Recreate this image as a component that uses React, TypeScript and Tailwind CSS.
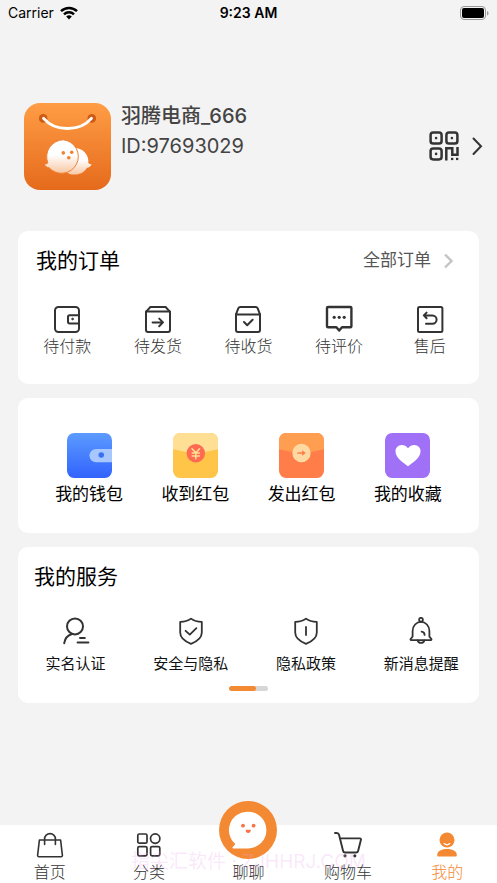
import type { ReactNode } from "react";

type Item = { label: string; icon: ReactNode };

function Line({ children, size = 28, width = 2 }: { children: ReactNode; size?: number; width?: number }) {
  return (
    <svg
      width={size}
      height={size}
      viewBox="0 0 28 28"
      fill="none"
      stroke="currentColor"
      strokeWidth={width}
      strokeLinecap="round"
      strokeLinejoin="round"
      aria-hidden="true"
    >
      {children}
    </svg>
  );
}

const orders: Item[] = [
  {
    label: "待付款",
    icon: (
      <Line>
        <rect x="2" y="2" width="24" height="25" rx="3.5" />
        <path d="M26 10.2H16.6a1.6 1.6 0 0 0-1.6 1.6v5a1.6 1.6 0 0 0 1.6 1.6H26" />
        <circle cx="19.5" cy="14" r="0.8" fill="currentColor" strokeWidth="1" />
      </Line>
    ),
  },
  {
    label: "待发货",
    icon: (
      <Line>
        <path d="M2.2 6.6 6.4 2h15.2l4.2 4.6" />
        <path d="M2 6.6h24V25a2 2 0 0 1-2 2H4a2 2 0 0 1-2-2z" />
        <path d="M8.6 17.4h10M15.2 13.6l3.8 3.8-3.8 3.8" />
      </Line>
    ),
  },
  {
    label: "待收货",
    icon: (
      <Line>
        <path d="M2 9.4 4.4 3.2A2 2 0 0 1 6.2 2h15.6a2 2 0 0 1 1.8 1.2L26 9.4V25a2 2 0 0 1-2 2H4a2 2 0 0 1-2-2z" />
        <path d="M2 9.4h24M10 17l3.2 3.2 5.4-5.4" />
      </Line>
    ),
  },
  {
    label: "待评价",
    icon: (
      <Line width={2.4}>
        <path d="M3 2h22.4a1 1 0 0 1 1 1v18.2a1 1 0 0 1-1 1H17l-2.8 3.4-2.8-3.4H3a1 1 0 0 1-1-1V3a1 1 0 0 1 1-1z" />
        <g fill="currentColor" stroke="none">
          <circle cx="9.2" cy="12.3" r="1.6" />
          <circle cx="14.2" cy="12.3" r="1.6" />
          <circle cx="19.2" cy="12.3" r="1.6" />
        </g>
      </Line>
    ),
  },
  {
    label: "售后",
    icon: (
      <Line>
        <rect x="2" y="2" width="24.4" height="25" rx="1.5" />
        <path d="M10 18.8h6.4a4.2 4.2 0 0 0 0-8.4H8.4M10.6 7.6l-2.8 2.8 2.8 2.8" />
      </Line>
    ),
  },
];

const wallets: Item[] = [
  {
    label: "我的钱包",
    icon: (
      <svg width="45" height="45" viewBox="0 0 44 44" aria-hidden="true">
        <defs>
          <linearGradient id="wallet" x1="0" y1="0" x2="0" y2="1">
            <stop offset="0" stopColor="#5c9bff" />
            <stop offset="1" stopColor="#3263fd" />
          </linearGradient>
        </defs>
        <rect width="44" height="44" rx="7" fill="url(#wallet)" />
        <path d="M44 15.6H28.4a6.5 6.5 0 0 0 0 13H44z" fill="#a9c7ff" />
        <circle cx="33.5" cy="21.6" r="2.7" fill="#3770f5" />
      </svg>
    ),
  },
  {
    label: "收到红包",
    icon: (
      <svg width="45" height="45" viewBox="0 0 44 44" aria-hidden="true">
        <rect width="44" height="44" rx="7" fill="#ffc549" />
        <path d="M0 15.8V7a7 7 0 0 1 7-7h30a7 7 0 0 1 7 7v8.8Q22 22 0 15.8z" fill="#ffdf94" />
        <circle cx="22.3" cy="19.8" r="9" fill="#ff6a53" />
        <path
          d="m18.6 15.4 3.7 4 3.7-4M22.3 19.4v5.8M18.8 19.6h7M18.8 22.4h7"
          fill="none"
          stroke="#ffdf94"
          strokeWidth="1.5"
          strokeLinecap="round"
        />
      </svg>
    ),
  },
  {
    label: "发出红包",
    icon: (
      <svg width="45" height="45" viewBox="0 0 44 44" aria-hidden="true">
        <rect width="44" height="44" rx="7" fill="#ff7d49" />
        <path d="M0 15.8V7a7 7 0 0 1 7-7h30a7 7 0 0 1 7 7v8.8Q22 22 0 15.8z" fill="#ff9d50" />
        <circle cx="22" cy="19.6" r="9" fill="#ffd9a2" />
        <path d="M18 19.6h5.500" stroke="#ff7d49" strokeWidth="1.500" />
        <path d="m22.600 16.900 3.600 2.700-3.600 2.700z" fill="#ff7d49" />
      </svg>
    ),
  },
  {
    label: "我的收藏",
    icon: (
      <svg width="45" height="45" viewBox="0 0 44 44" aria-hidden="true">
        <rect width="44" height="44" rx="7" fill="#a070f6" />
        <path
          d="M22.5 32.5C19.5 30 10.2 24.6 10.2 17.8a6 6 0 0 1 6-6c2.8 0 4.8 1.2 6.3 3.2 1.5-2 3.5-3.2 6.3-3.2a6 6 0 0 1 6 6c0 6.800-9.300 12.200-12.300 14.700z"
          fill="#fff"
        />
      </svg>
    ),
  },
];

const shield = "M14 1.600c3.200 2.400 6.800 3.200 10.800 3.300v10.600c0 5.200-4.600 8.900-10.800 11.300C7.800 24.400 3.200 20.700 3.200 15.500V4.900C7.200 4.800 10.800 4 14 1.600z";

const services: Item[] = [
  {
    label: "实名认证",
    icon: (
      <Line>
        <circle cx="13" cy="9.400" r="8" />
        <path d="M10 17C5.500 18.400 2.800 22 2.200 26.200M18 20.900h4.800M15.600 25.400h10.800" />
      </Line>
    ),
  },
  {
    label: "安全与隐私",
    icon: (
      <Line width={1.8}>
        <path d={shield} />
        <path d="m8.600 13.800 4.200 3.800 6.600-6.400" />
      </Line>
    ),
  },
  {
    label: "隐私政策",
    icon: (
      <Line width={1.8}>
        <path d={shield} />
        <path d="M14 10v8" />
      </Line>
    ),
  },
  {
    label: "新消息提醒",
    icon: (
      <Line width={1.8}>
        <circle cx="14" cy="2.700" r="1.900" />
        <path d="M5.600 14a8.400 9.200 0 0 1 16.800 0v5.600l2 2.400a.7.7 0 0 1-.5 1.100H4.100a.7.7 0 0 1-.5-1.100l2-2.400z" />
        <path d="M10.600 23.300a3.500 3.500 0 0 0 6.800 0M14.600 14.600a3.400 3.400 0 0 1 3 3.300" />
      </Line>
    ),
  },
];

const tabs: (Item & { active?: boolean })[] = [
  {
    label: "首页",
    icon: (
      <Line width={1.600}>
        <path d="M3.400 9h21.200l1.800 15.400a1.200 1.200 0 0 1-1.200 1.300H2.800a1.200 1.200 0 0 1-1.200-1.300z" />
        <path d="M8.600 13.400V8a5.400 5.400 0 0 1 10.800 0v5.400" />
      </Line>
    ),
  },
  {
    label: "分类",
    icon: (
      <Line width={1.700}>
        <rect x="2.800" y="3" width="9.200" height="9.200" rx="1.500" />
        <circle cx="20.200" cy="7.600" r="4.700" />
        <rect x="2.800" y="15.600" width="9.200" height="9.200" rx="1.500" />
        <rect x="15.600" y="15.600" width="9.200" height="9.200" rx="1.500" />
      </Line>
    ),
  },
  {
    label: "聊聊",
    icon: (
      <svg className="-mt-6" width="58" height="58" viewBox="0 0 58 58" aria-hidden="true">
        <circle cx="29" cy="29" r="29" fill="#f48934" />
        <path d="M29 10.700a18.400 18.400 0 0 1 0 36.800H14.400c-1 0-1.300-1-.6-1.600l2.600-2.800A18.400 18.400 0 0 1 29 10.700z" fill="#fff" />
        <g fill="#f8734a">
          <circle cx="24" cy="24.700" r="1.900" />
          <circle cx="34.600" cy="24.700" r="1.900" />
          <path d="M26.700 28.800h5a2.500 3.200 0 0 1-5 0z" />
        </g>
      </svg>
    ),
  },
  {
    label: "购物车",
    icon: (
      <Line width={1.900}>
        <path d="M1 2h1.600a2.600 2.600 0 0 1 2.500 2l4 16a2 2 0 0 0 1.900 1.500h11.200a2 2 0 0 0 1.900-1.500L27 8.600a1 1 0 0 0-1-1.200H6" />
        <g fill="currentColor" stroke="none">
          <circle cx="11" cy="24.800" r="1.600" />
          <circle cx="20.800" cy="24.800" r="1.600" />
        </g>
      </Line>
    ),
  },
  {
    label: "我的",
    active: true,
    icon: (
      <svg width="28" height="28" viewBox="0 0 28 28" fill="currentColor" aria-hidden="true">
        <circle cx="14" cy="9" r="7.500" />
        <path d="M4.200 24c0-3.600 3.600-6 9.800-6s9.800 2.400 9.800 6c0 1-.5 1.500-1.500 1.500H5.700c-1 0-1.500-.5-1.500-1.500z" />
        <path d="M11.200 12.600q2.800 2.400 5.600 0" fill="none" stroke="#fff" strokeWidth="1.300" strokeLinecap="round" />
      </svg>
    ),
  },
];

function Avatar() {
  return (
    <svg width="87" height="87" viewBox="0 0 87 87" role="img" aria-label="羽腾电商">
      <defs>
        <linearGradient id="bag" x1="0" y1="0" x2="0" y2="1">
          <stop offset="0" stopColor="#ff9d45" />
          <stop offset="1" stopColor="#e56a1c" />
        </linearGradient>
        <linearGradient id="ghost" x1="0" y1="0" x2="0" y2="1">
          <stop offset="0" stopColor="#fff" />
          <stop offset="0.450" stopColor="#fff" />
          <stop offset="1" stopColor="#f8c7a2" />
        </linearGradient>
      </defs>
      <rect width="87" height="87" rx="16" fill="url(#bag)" />
      <circle cx="19.200" cy="15.400" r="4.300" fill="#cf5a14" />
      <circle cx="67.800" cy="15.400" r="4.300" fill="#cf5a14" />
      <path d="M19.600 15.400C31 29 56 29 67.400 15.400" fill="none" stroke="#fff" strokeWidth="3" strokeLinecap="round" />
      <path d="M50 45a13.500 13.500 0 0 1 14.300 15c1 1 2 1.300 3.300 1.200-.8 2.200-2.500 3.400-4.800 3.700C58 73 47 73 42 69z" fill="url(#ghost)" />
      <path
        d="M39.300 36.800a16.800 16.800 0 1 1-14.200 28c-2.400-.3-4-1.500-4.700-3.700 1.300.1 2.400-.2 3.400-1.200A17 17 0 0 1 39.300 36.800z"
        fill="url(#ghost)"
        stroke="#ee8237"
        strokeWidth="1"
      />
      <g fill="#f08034">
        <circle cx="39.300" cy="49.900" r="1.800" />
        <circle cx="47.700" cy="49.300" r="1.800" />
        <circle cx="44.800" cy="54.800" r="1.800" />
      </g>
    </svg>
  );
}

function QrIcon() {
  return (
    <svg width="30" height="30" viewBox="0 0 30 30" fill="none" stroke="currentColor" strokeWidth="2.500" aria-hidden="true">
      <rect x="1.600" y="1.600" width="11" height="11" rx="2.600" />
      <rect x="17.400" y="1.600" width="11" height="11" rx="2.600" />
      <rect x="1.600" y="17.400" width="11" height="11" rx="2.600" />
      <path d="M17.300 29.400V17.200h6v6.600h5.200V16" />
      <g fill="currentColor" stroke="none">
        <circle cx="7.100" cy="7.100" r="1.300" />
        <circle cx="22.900" cy="7.100" r="1.300" />
        <circle cx="7.100" cy="22.900" r="1.300" />
        <rect x="22" y="26.800" width="2.300" height="2.300" />
        <rect x="27" y="26.800" width="2.300" height="2.300" />
      </g>
    </svg>
  );
}

function StatusBar() {
  return (
    <header className="grid h-[26px] grid-cols-3 items-center px-2 text-sm text-black">
      <div className="flex items-center gap-1.5">
        <span>Carrier</span>
        <svg width="18" height="14" viewBox="0 0 18 14" fill="none" stroke="currentColor" strokeWidth="2.500" aria-hidden="true">
          <path d="M1 5.200a11.400 11.400 0 0 1 16 0M4 8.300a7.200 7.200 0 0 1 10 0" />
          <path d="M9 13.400 6.200 10.600a4 4 0 0 1 5.600 0z" fill="currentColor" stroke="none" />
        </svg>
      </div>
      <time className="text-center font-semibold">9:23 AM</time>
      <svg className="justify-self-end" width="29" height="14" viewBox="0 0 29 14" aria-hidden="true">
        <rect x="0.500" y="0.500" width="25" height="13" rx="3.500" fill="none" stroke="#9a9a9a" />
        <rect x="2" y="2" width="22" height="10" rx="2" fill="#000" />
        <path d="M27 5v4.500q1.500-.5 1.500-2.200T27 5z" fill="#9a9a9a" />
      </svg>
    </header>
  );
}

export default function App() {
  return (
    <div className="flex min-h-screen flex-col bg-[#f3f3f3] font-[Inter,'Noto_Sans_CJK_SC',sans-serif] text-[#333]">
      <StatusBar />

      <section className="mt-[77px] flex items-start pr-[14px] pl-6">
        <Avatar />
        <div className="-mt-0.5 ml-[10px] flex-1 text-xl leading-[30px] text-[#444]">
          <h1 className="font-medium">羽腾电商_666</h1>
          <p>ID:97693029</p>
        </div>
        <button type="button" aria-label="我的二维码" className="mt-7 flex items-center gap-3">
          <QrIcon />
          <svg width="12" height="20" viewBox="0 0 12 20" fill="none" stroke="currentColor" strokeWidth="2" strokeLinecap="round" aria-hidden="true">
            <path d="m2.500 2.500 7.500 7.700L2.500 18" />
          </svg>
        </button>
      </section>

      <main className="mx-[18px] mt-[41px] flex flex-col gap-[14px]">
        <section className="rounded-[10px] bg-white px-1 pt-[13px] pb-[26px]">
          <div className="flex items-center justify-between pr-5 pl-[14px]">
            <h2 className="text-[21px] leading-[34px] text-black">我的订单</h2>
            <button type="button" className="flex items-center gap-[10px] text-[17px] text-[#555]">
              全部订单
              <svg width="14" height="16" viewBox="0 0 14 16" fill="none" stroke="#c4c4c4" strokeWidth="2.400" aria-hidden="true">
                <path d="m4 1.500 6.500 6.500L4 14.500" />
              </svg>
            </button>
          </div>
          <div className="mt-[27px] grid grid-cols-5">
            {orders.map((item) => (
              <button key={item.label} type="button" className="flex flex-col items-center gap-px">
                {item.icon}
                <span className="text-base font-light text-[#333]">{item.label}</span>
              </button>
            ))}
          </div>
        </section>

        <section className="grid grid-cols-4 rounded-[10px] bg-white px-[18px] pt-[35px] pb-[27px]">
          {wallets.map((item) => (
            <button key={item.label} type="button" className="flex flex-col items-center gap-1 text-[17px] leading-6 text-black">
              {item.icon}
              {item.label}
            </button>
          ))}
        </section>

        <section className="rounded-[10px] bg-white pt-[13px] pb-3">
          <h2 className="pl-4 text-[21px] leading-[34px] text-black">我的服务</h2>
          <div className="mt-[23px] grid grid-cols-4">
            {services.map((item) => (
              <button key={item.label} type="button" className="flex flex-col items-center gap-[7px] text-[15px] leading-6">
                {item.icon}
                <span className="text-[#111]">{item.label}</span>
              </button>
            ))}
          </div>
          <div className="mx-auto mt-[10px] h-[5px] w-[39px] overflow-hidden rounded-full bg-[#d6d6d6]">
            <div className="h-full w-[27px] rounded-full bg-[#f48934]" />
          </div>
        </section>
      </main>

      <nav className="relative mt-auto grid grid-cols-5 items-end bg-white">
        {tabs.map((tab) => (
          <a
            key={tab.label}
            href="#"
            aria-current={tab.active ? "page" : undefined}
            className={`flex flex-col items-center text-base leading-[22px] font-light ${tab.active ? "text-[#f48934]" : "text-[#333]"}`}
          >
            <span className="mb-0.5 flex">{tab.icon}</span>
            {tab.label}
          </a>
        ))}
        <p className="pointer-events-none absolute inset-x-0 bottom-1 text-center text-[19px] leading-[34px] text-[#f2a0ee]/25">
          指尖汇软件 · ZJHHRJ.COM
        </p>
      </nav>
    </div>
  );
}
